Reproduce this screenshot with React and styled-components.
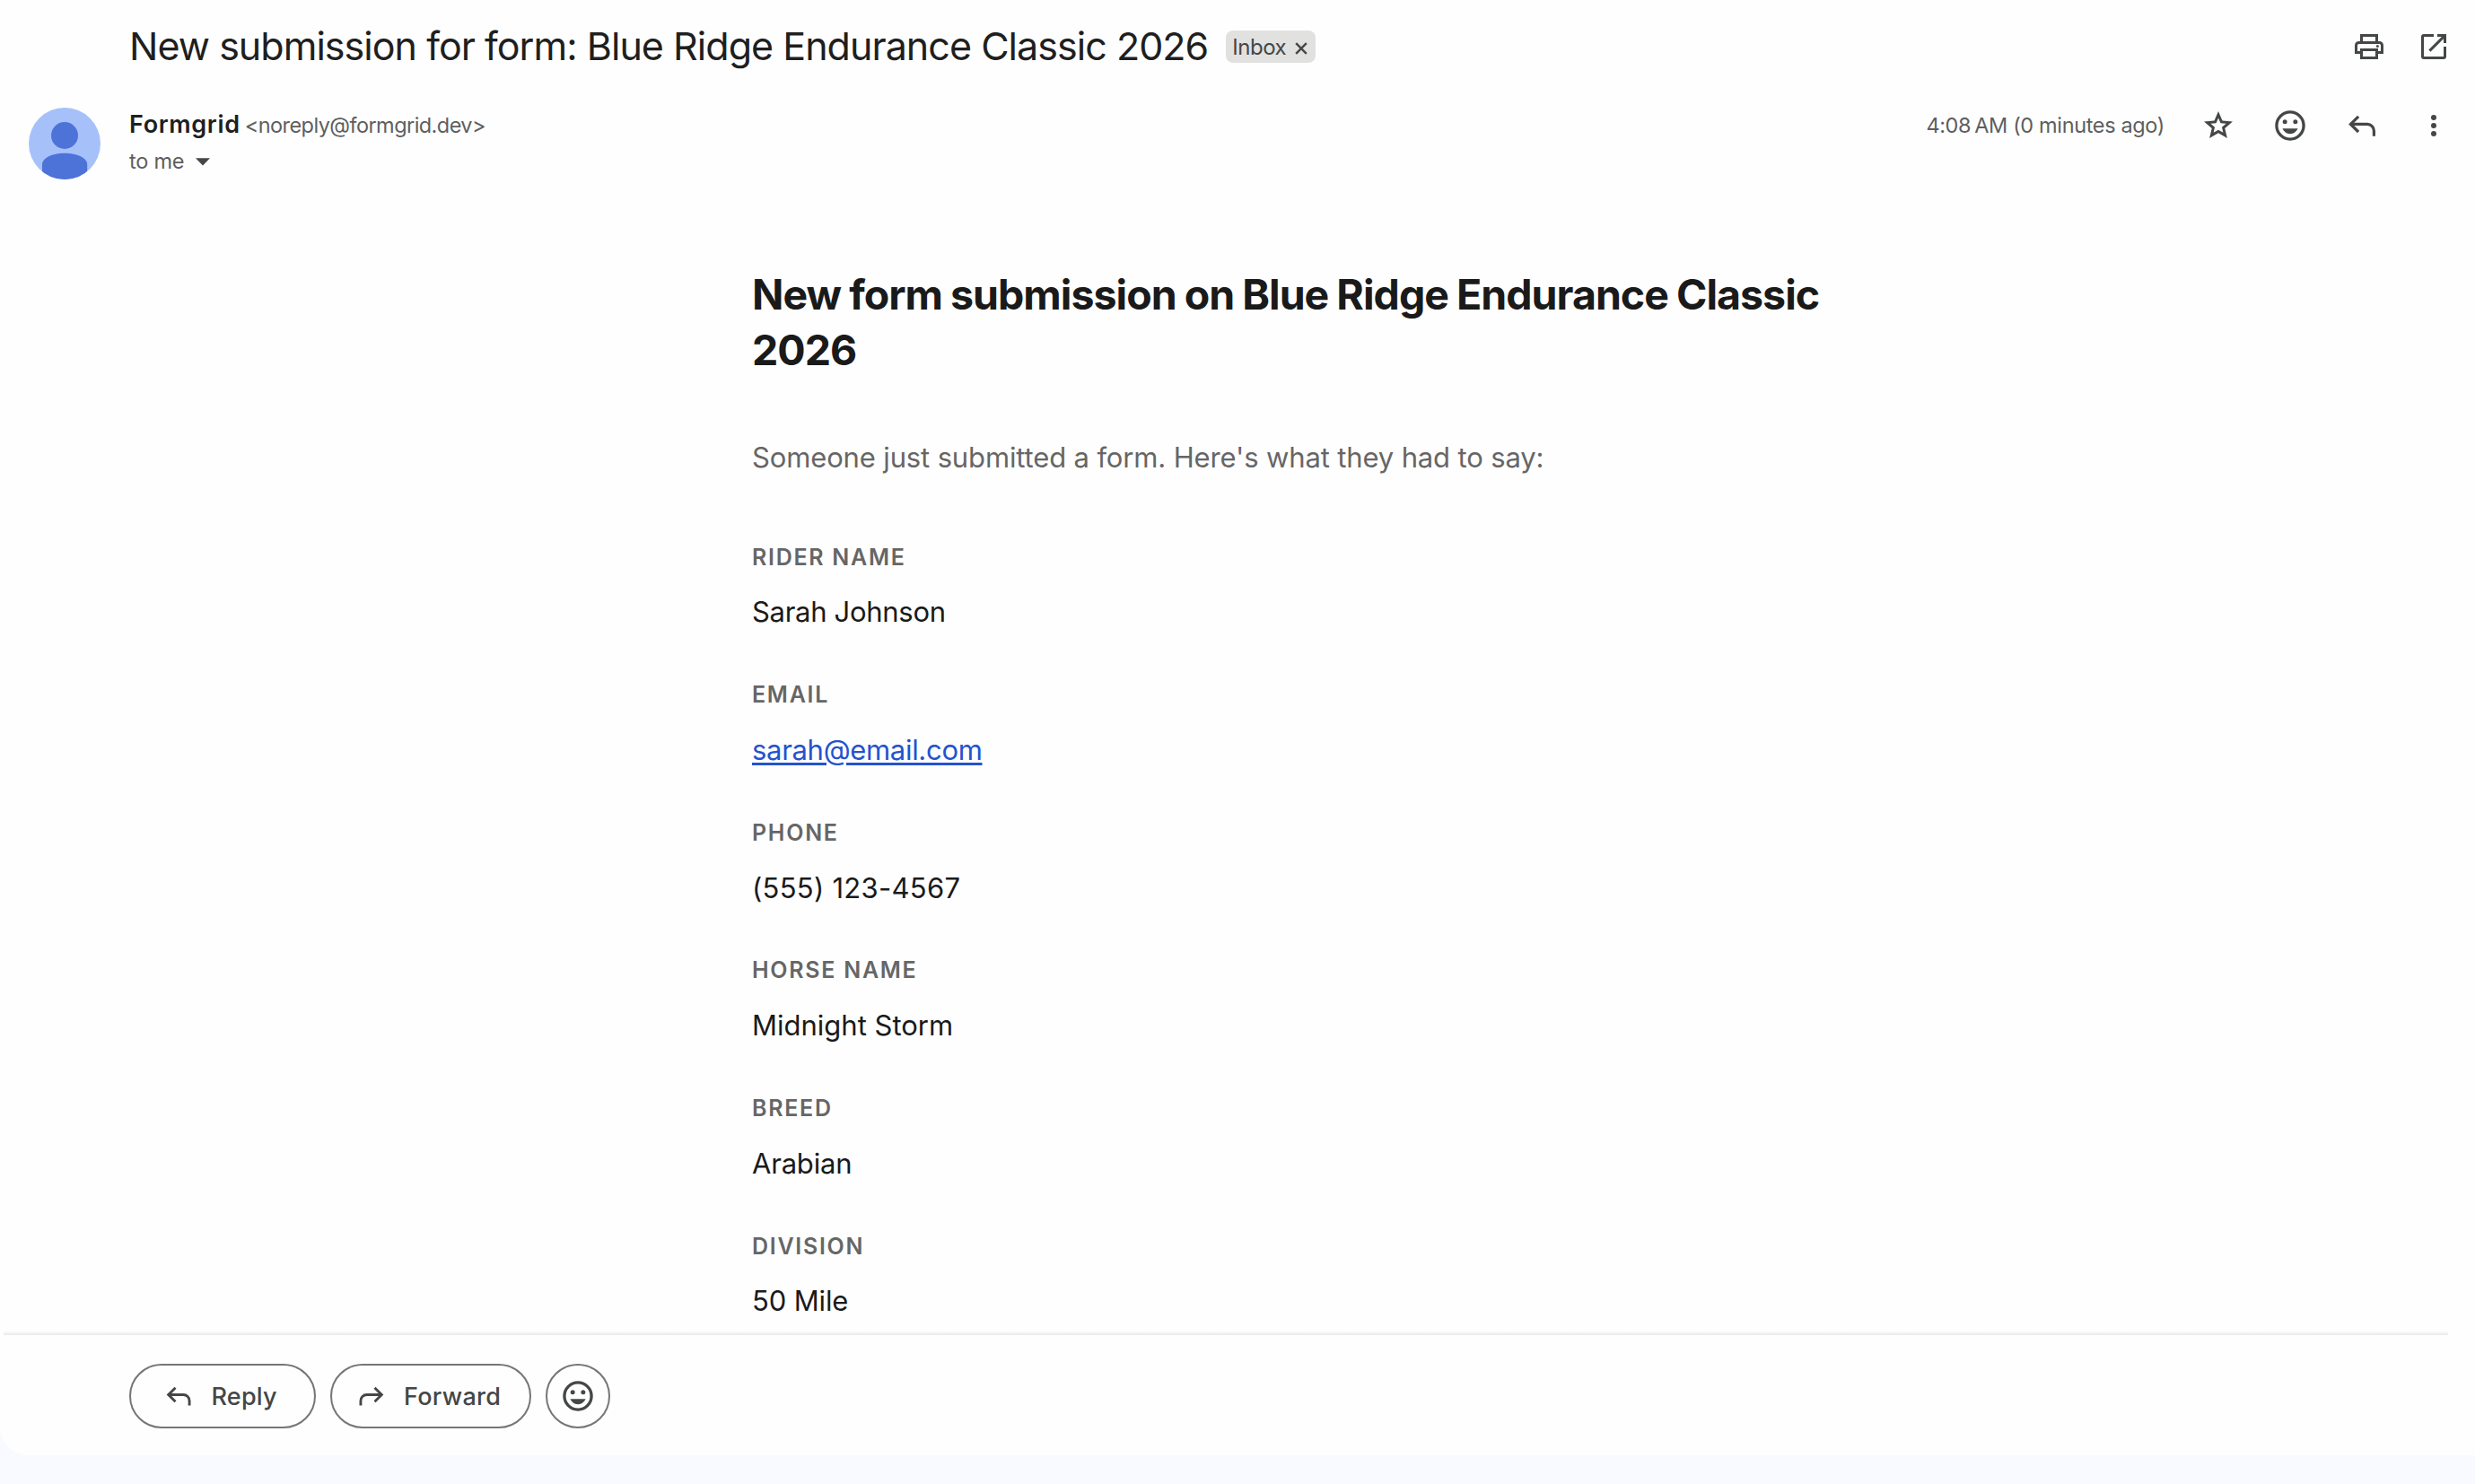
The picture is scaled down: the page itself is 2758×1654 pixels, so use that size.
import React from "react";
import styled, { createGlobalStyle } from "styled-components";

const GlobalStyle = createGlobalStyle`
  *, *::before, *::after { box-sizing: border-box; }
  body {
    margin: 0;
    background: #f8faff;
    font-family: Inter, "Liberation Sans", sans-serif;
    color: #1f1f1f;
  }
`;

const Page = styled.div`
  height: 1654px;
  background: #f8faff;
  overflow: hidden;
`;

const Panel = styled.main`
  display: flex;
  flex-direction: column;
  height: 1622px;
  background: #fefefe;
  border-bottom-left-radius: 32px;
`;

const SubjectBar = styled.header`
  display: flex;
  align-items: center;
  height: 104px;
  padding: 0 26px 0 144px;
`;

const Subject = styled.h1`
  margin: 0 20px 0 0;
  padding-bottom: 2px;
  font-size: 43px;
  font-weight: 400;
  line-height: 52px;
  letter-spacing: -0.96px;
  white-space: nowrap;
`;

const Badge = styled.span`
  display: flex;
  align-items: center;
  gap: 10px;
  width: 100px;
  height: 36px;
  padding-left: 7px;
  border-radius: 8px;
  background: #e1e1df;
  color: #444746;
  font-size: 24px;
  letter-spacing: -0.5px;
`;

const CloseMark = styled.svg`
  width: 14px;
  height: 14px;
  margin-top: 4px;
  flex: none;
`;

const Actions = styled.div`
  display: flex;
  align-items: center;
  height: 40px;
  margin-left: auto;
  gap: ${(p) => p.$gap}px;
  color: #444746;
`;

const IconSvg = styled.svg`
  display: block;
  flex: none;
  width: ${(p) => p.$size || 40}px;
  height: ${(p) => p.$size || 40}px;
`;

const MessageHeader = styled.section`
  display: flex;
  align-items: flex-start;
  height: 96px;
  padding: 16px 26px 0 32px;
`;

const Avatar = styled.svg`
  width: 80px;
  height: 80px;
  margin-right: 32px;
  flex: none;
`;

const SenderBlock = styled.div`
  display: flex;
  flex-direction: column;
`;

const SenderLine = styled.div`
  display: flex;
  align-items: baseline;
  height: 38px;
  line-height: 38px;
`;

const SenderName = styled.span`
  font-size: 27px;
  font-weight: 600;
  letter-spacing: 0.65px;
`;

const SenderAddress = styled.span`
  margin-left: 5px;
  font-size: 23.5px;
  letter-spacing: -0.56px;
  color: #5e5e5e;
`;

const Recipient = styled.button`
  display: flex;
  align-items: center;
  gap: 13px;
  height: 42px;
  padding: 1px 0 0;
  border: 0;
  background: none;
  font: inherit;
  font-size: 23.5px;
  letter-spacing: -0.25px;
  color: #5e5e5e;
`;

const Caret = styled.svg`
  width: 16px;
  height: 9px;
  margin-top: 1px;
`;

const Time = styled.span`
  font-size: 23.5px;
  letter-spacing: -0.36px;
  line-height: 38px;
  color: #5e5e5e;
  white-space: nowrap;
`;

const Body = styled.article`
  flex: 1;
  min-height: 0;
  overflow: hidden;
  padding: 97px 0 0 838px;
`;

const Content = styled.div`
  width: 1200px;
`;

const Heading = styled.h2`
  margin: 0;
  font-size: 46.5px;
  font-weight: 700;
  line-height: 62px;
  letter-spacing: -0.98px;
  word-spacing: -1px;
  color: #1a1a1a;
`;

const Intro = styled.p`
  margin: 64.4px 0 65.2px;
  font-size: 31px;
  line-height: 50px;
  letter-spacing: -0.14px;
  color: #666;
`;

const Fields = styled.dl`
  display: flex;
  flex-direction: column;
  gap: 46.8px;
  margin: 0;
`;

const Field = styled.div`
  display: flex;
  flex-direction: column;
  gap: 16.8px;
`;

const Label = styled.dt`
  font-size: 25px;
  font-weight: 600;
  line-height: 40px;
  letter-spacing: 1.72px;
  text-transform: uppercase;
  color: #666;
`;

const Value = styled.dd`
  margin: 0;
  font-size: 31px;
  line-height: 50px;
  letter-spacing: ${(p) => p.$spacing}px;
  color: #1a1a1a;
`;

const MailLink = styled.a`
  color: #2453cd;
  text-decoration: underline;
  text-decoration-thickness: 2.5px;
  text-underline-offset: 3px;
`;

const Divider = styled.div`
  height: 4px;
  margin: 0 30px 0 4px;
  background: linear-gradient(to bottom, #fcfcfc, #e9e9e9);
  border-radius: 2px 2px 0 0;
`;

const Footer = styled.footer`
  display: flex;
  gap: 16px;
  height: 134px;
  padding: 32px 0 0 144px;
`;

const PillButton = styled.button`
  display: flex;
  align-items: center;
  gap: ${(p) => p.$gap}px;
  width: ${(p) => p.$width}px;
  height: 72px;
  padding: 0 0 0 ${(p) => p.$start}px;
  border: 2px solid #747775;
  border-radius: 36px;
  background: transparent;
  color: #444746;
  font: inherit;
  font-size: 27px;
  font-weight: 500;
  letter-spacing: ${(p) => p.$spacing || 0}px;
`;

const PrintIcon = () => (
  <IconSvg viewBox="0 0 20 20" fill="none" stroke="currentColor" strokeWidth="1.5">
    <path d="M5.75 7.5V3.75h8.5V7.5" />
    <path d="M5 13.25H2.75V9.25a1.5 1.5 0 0 1 1.5-1.5h11.5a1.5 1.5 0 0 1 1.5 1.5v4H15" />
    <path d="M5.75 11.75h8.5v4.5h-8.5z" />
    <circle cx="14.7" cy="9.8" r="0.75" fill="currentColor" stroke="none" />
  </IconSvg>
);

const OpenIcon = () => (
  <IconSvg viewBox="0 0 20 20" fill="none" stroke="currentColor" strokeWidth="1.5">
    <path d="M10 3.75H4.5a.75.75 0 0 0-.75.75v11c0 .41.34.75.75.75h11c.41 0 .75-.34.75-.75V10" />
    <path d="M12 3.75h4.25V8" />
    <path d="M7.7 12.3 16.2 3.8" />
  </IconSvg>
);

const StarIcon = () => (
  <IconSvg viewBox="0 -960 960 960" fill="currentColor">
    <path d="m352-293 128-76 129 76-34-144 113-97-149-13-59-137-59 137-149 13 112 97-32 144ZM243-144l63-266L96-589l276-24 108-251 108 252 276 23-210 179 63 266-237-141-237 141Z" />
  </IconSvg>
);

const EmojiIcon = () => (
  <IconSvg viewBox="0 0 24 24" fill="currentColor">
    <circle cx="12" cy="12" r="9.05" fill="none" stroke="currentColor" strokeWidth="2" />
    <circle cx="8.5" cy="9.5" r="1.5" />
    <circle cx="15.5" cy="9.5" r="1.5" />
    <path d="M12 17.5c2.33 0 4.31-1.46 5.11-3.5H6.89c.8 2.04 2.78 3.5 5.11 3.5z" />
  </IconSvg>
);

const ReplyIcon = ({ size }) => (
  <IconSvg $size={size} viewBox="0 0 40 40" fill="none" stroke="currentColor" strokeWidth="3.2">
    <path d="M16.1 9.8 7.4 18.4 16.1 27" />
    <path d="M7.4 18.4H26a7.4 7.4 0 0 1 7.4 7.4v5.9" />
  </IconSvg>
);

const ForwardIcon = ({ size }) => (
  <IconSvg $size={size} viewBox="0 0 40 40" fill="none" stroke="currentColor" strokeWidth="3.2">
    <path d="M23.9 9.8 32.6 18.4 23.9 27" />
    <path d="M32.6 18.4H14a7.4 7.4 0 0 0-7.4 7.4v5.9" />
  </IconSvg>
);

const MoreIcon = () => (
  <IconSvg viewBox="0 0 40 40" fill="currentColor">
    <circle cx="20" cy="11" r="3" />
    <circle cx="20" cy="20" r="3" />
    <circle cx="20" cy="29" r="3" />
  </IconSvg>
);

const fields = [
  { label: "Rider name", value: "Sarah Johnson", spacing: -0.3 },
  { label: "Email", value: "sarah@email.com", spacing: -0.31, link: true },
  { label: "Phone", value: "(555) 123-4567", spacing: 0.27 },
  { label: "Horse name", value: "Midnight Storm", spacing: 0 },
  { label: "Breed", value: "Arabian", spacing: -0.2 },
  { label: "Division", value: "50 Mile", spacing: -0.15 },
];

export default function App() {
  return (
    <Page>
      <GlobalStyle />
      <Panel>
        <SubjectBar>
          <Subject>New submission for form: Blue Ridge Endurance Classic 2026</Subject>
          <Badge>
            Inbox
            <CloseMark viewBox="0 0 14 14" stroke="currentColor" strokeWidth="2.4">
              <path d="M1.2 1.2 12.8 12.8M12.8 1.2 1.2 12.8" />
            </CloseMark>
          </Badge>
          <Actions $gap={32}>
            <PrintIcon />
            <OpenIcon />
          </Actions>
        </SubjectBar>

        <MessageHeader>
          <Avatar viewBox="0 0 80 80">
            <defs>
              <clipPath id="avatar-disc">
                <circle cx="40" cy="40" r="40" />
              </clipPath>
            </defs>
            <g clipPath="url(#avatar-disc)">
              <rect width="80" height="80" fill="#a6c1fa" />
              <circle cx="40" cy="31" r="15" fill="#4d72d8" />
              <path d="M15 80V63.5C15 56 26 50.7 40 50.7S65.2 56 65.2 63.5V80z" fill="#4d72d8" />
            </g>
          </Avatar>
          <SenderBlock>
            <SenderLine>
              <SenderName>Formgrid</SenderName>
              <SenderAddress>&lt;noreply@formgrid.dev&gt;</SenderAddress>
            </SenderLine>
            <Recipient>
              to me
              <Caret viewBox="0 0 16 9" fill="#444746">
                <path d="M0 .3h16L8 8.6z" />
              </Caret>
            </Recipient>
          </SenderBlock>
          <Actions $gap={40}>
            <Time>4:08{"\u202f"}AM (0 minutes ago)</Time>
            <StarIcon />
            <EmojiIcon />
            <ReplyIcon />
            <MoreIcon />
          </Actions>
        </MessageHeader>

        <Body>
          <Content>
            <Heading>New form submission on Blue Ridge Endurance Classic 2026</Heading>
            <Intro>Someone just submitted a form. Here's what they had to say:</Intro>
            <Fields>
              {fields.map((f) => (
                <Field key={f.label}>
                  <Label>{f.label}</Label>
                  <Value $spacing={f.spacing}>
                    {f.link ? <MailLink href={`mailto:${f.value}`}>{f.value}</MailLink> : f.value}
                  </Value>
                </Field>
              ))}
            </Fields>
          </Content>
        </Body>

        <Divider />
        <Footer>
          <PillButton $width={208} $start={35} $gap={18.5} $spacing={0.2}>
            <ReplyIcon size={36} />
            Reply
          </PillButton>
          <PillButton $width={224} $start={26} $gap={18} $spacing={0.3}>
            <ForwardIcon size={36} />
            Forward
          </PillButton>
          <PillButton $width={72} $start={14} $gap={0} aria-label="Add reaction">
            <EmojiIcon />
          </PillButton>
        </Footer>
      </Panel>
    </Page>
  );
}
